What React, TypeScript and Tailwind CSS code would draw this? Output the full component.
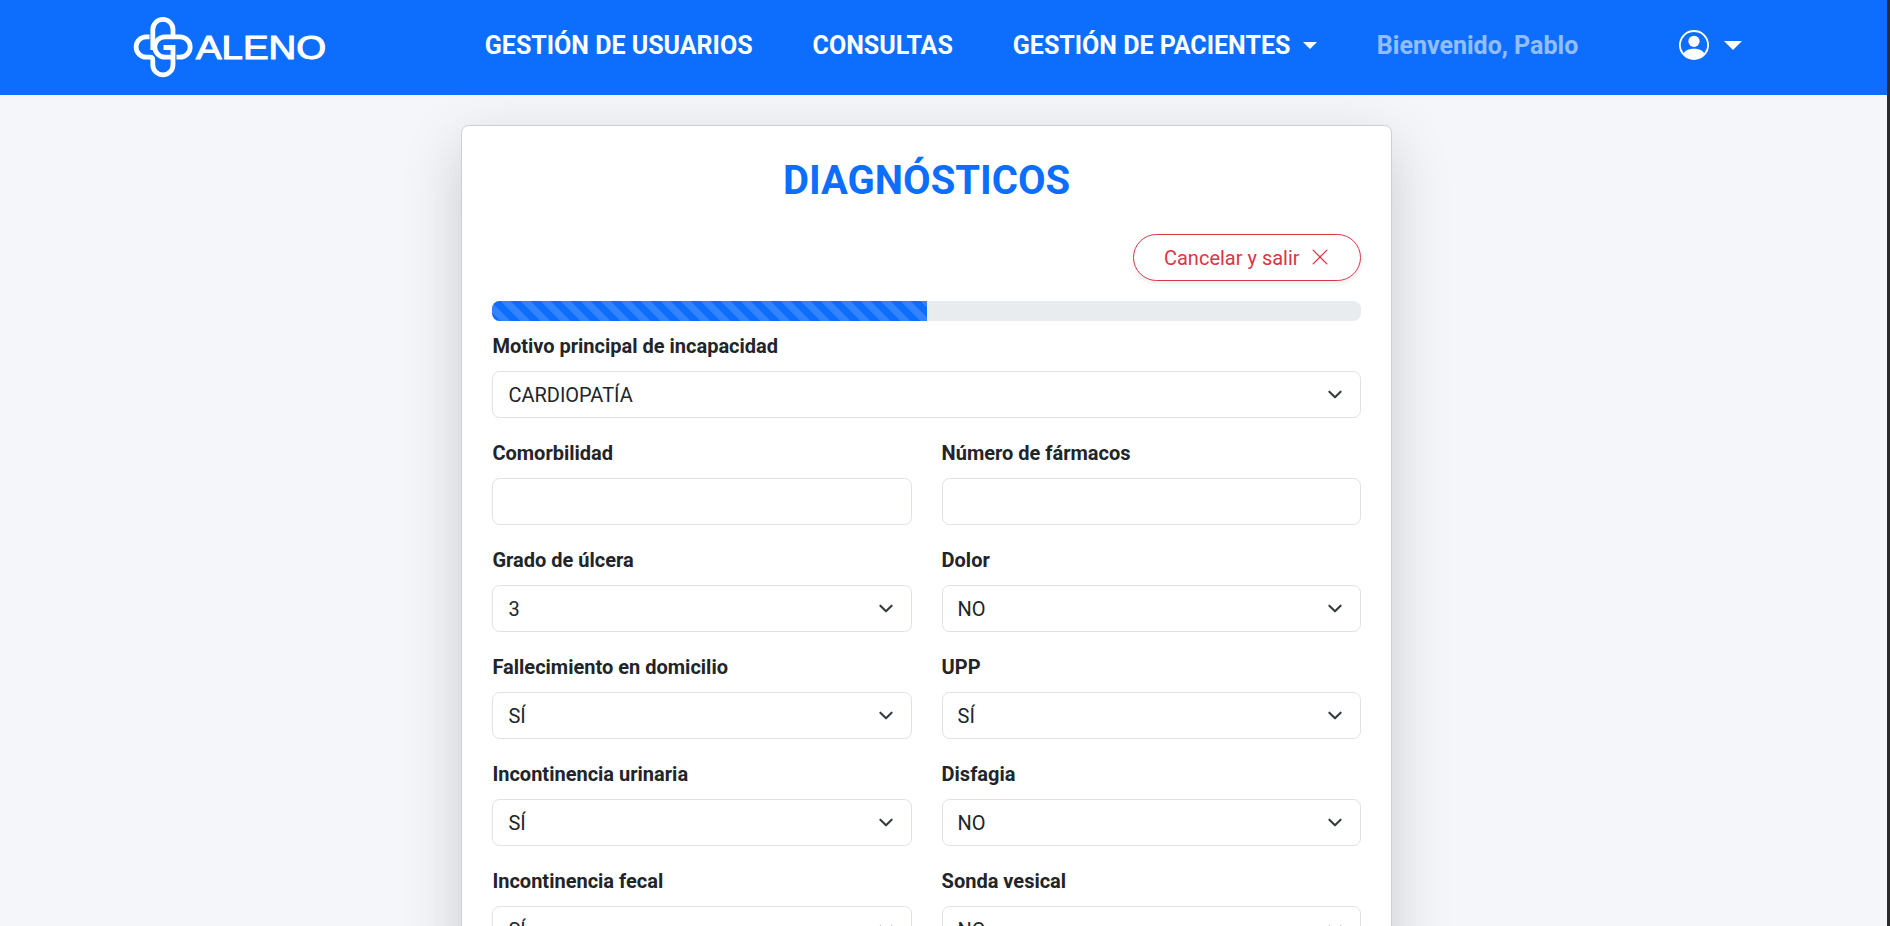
import React from "react";
import { BsPersonCircle, BsXLg } from "react-icons/bs";

type FieldProps = { label: string; value?: string; kind?: "select" | "input"; wide?: boolean };

const fields: FieldProps[] = [
  { label: "Motivo principal de incapacidad", value: "CARDIOPATÍA", wide: true },
  { label: "Comorbilidad", kind: "input" },
  { label: "Número de fármacos", kind: "input" },
  { label: "Grado de úlcera", value: "3" },
  { label: "Dolor", value: "NO" },
  { label: "Fallecimiento en domicilio", value: "SÍ" },
  { label: "UPP", value: "SÍ" },
  { label: "Incontinencia urinaria", value: "SÍ" },
  { label: "Disfagia", value: "NO" },
  { label: "Incontinencia fecal", value: "SÍ" },
  { label: "Sonda vesical", value: "NO" },
];

function Chevron() {
  return (
    <svg viewBox="0 0 16 16" className="h-[15px] w-5" fill="none" stroke="#343a40" strokeWidth="2.2" strokeLinecap="round" strokeLinejoin="round">
      <path d="m2 5 6 6 6-6" />
    </svg>
  );
}

function Field({ label, value, kind = "select", wide }: FieldProps) {
  const box = "h-[47px] w-full rounded-[7.5px] border border-[#dee2e6] bg-white px-[15px] text-[20px] leading-[30px] text-[#212529]";
  return (
    <div className={wide ? "col-span-2" : ""}>
      <label className="mb-2.5 block text-[20px] font-bold leading-[30px] text-[#212529]">{label}</label>
      {kind === "input" ? (
        <input className={`${box} block`} />
      ) : (
        <button type="button" className={`${box} flex items-center justify-between text-left`}>
          <span>{value}</span>
          <Chevron />
        </button>
      )}
    </div>
  );
}

function Logo() {
  return (
    <svg width="198" height="64" viewBox="130 15 198 64" className="mb-[1px] block shrink-0" fill="none" stroke="#fff" strokeWidth="4.8">
      <path d="M152.8 50V29.5a10.1 10.1 0 0 1 20.2 0V36" />
      <path d="M149.5 36.8h-3.2a10.2 10.2 0 0 0 0 20.4h3.5q3 0 3 3v4.5a10.1 10.1 0 0 0 20.2 0V47.5H163.5" />
      <path d="M171 57.2h-6a10.2 10.2 0 0 1 0-20.4h15a10.2 10.2 0 0 1 0 20.4h-3.5" />
      <text x="196" y="58.8" fill="#fff" stroke="#fff" strokeWidth="1.1" fontFamily="Liberation Sans, Arial, sans-serif" fontWeight="400" fontSize="33" textLength="130" lengthAdjust="spacingAndGlyphs">ALENO</text>
    </svg>
  );
}

export default function App() {
  return (
    <div className="flex h-[926px] overflow-hidden bg-[#f4f6fa] font-['Roboto',sans-serif]">
      <div className="flex min-w-0 flex-1 flex-col">
        <nav className="flex h-[95px] shrink-0 items-center bg-[#0d6efd] pl-[130px] text-[25px] font-bold leading-[37.5px] text-white">
          <Logo />
          <div className="flex items-center pb-[3px]">
            <a className="ml-[156.8px]">GESTIÓN DE USUARIOS</a>
            <a className="ml-[60px]">CONSULTAS</a>
            <a className="ml-[60px] flex items-center">
              GESTIÓN DE PACIENTES
              <svg className="mb-[2px] ml-[12.5px] h-[7px] w-[14px]" viewBox="0 0 14 7" fill="currentColor"><path d="M0 0h14L7 7z" /></svg>
            </a>
            <span className="ml-[60px] text-white/55">Bienvenido, Pablo</span>
            <a className="mb-[2px] ml-[100.5px] flex items-center">
              <BsPersonCircle size={30} />
              <svg className="ml-[15px] h-[9px] w-[18px]" viewBox="0 0 18 9" fill="currentColor"><path d="M0 0h18L9 9z" /></svg>
            </a>
          </div>
        </nav>
        <main className="flex min-h-0 flex-1 items-start overflow-hidden pl-[461.4px] pt-[30px]">
          <section className="w-[930.4px] shrink-0 rounded-[7.5px] border border-[#cdced1] bg-white px-[30px] pb-[30px] pt-[31px] shadow-[0_20px_60px_rgba(0,0,0,0.175)]">
            <h1 className="text-center text-[40px] font-bold leading-[48px] text-[#0d6efd]">DIAGNÓSTICOS</h1>
            <div className="mt-[29px] flex justify-end">
              <button type="button" className="flex h-[47px] w-[228px] items-center justify-center gap-2.5 rounded-full border border-[#dc3545] text-[20px] leading-[30px] text-[#dc3545] shadow-[0_2.5px_5px_rgba(0,0,0,0.075)]">
                Cancelar y salir
                <BsXLg size={20} className="mb-[2px]" />
              </button>
            </div>
            <div className="mt-5 h-5 overflow-hidden rounded-[7.5px] bg-[#e9ecef]">
              <div className="h-full w-1/2 bg-[#0d6efd] bg-[linear-gradient(45deg,rgba(255,255,255,0.15)_25%,transparent_25%,transparent_50%,rgba(255,255,255,0.15)_50%,rgba(255,255,255,0.15)_75%,transparent_75%,transparent)] bg-[length:20px_20px] bg-[position:9px_0]" />
            </div>
            <form className="mt-2.5 grid grid-cols-2 gap-x-[30px] gap-y-5">
              {fields.map((f) => (
                <Field key={f.label} {...f} />
              ))}
            </form>
          </section>
        </main>
      </div>
      <div className="w-[3px] shrink-0 bg-[#2b2b2b]" />
    </div>
  );
}
